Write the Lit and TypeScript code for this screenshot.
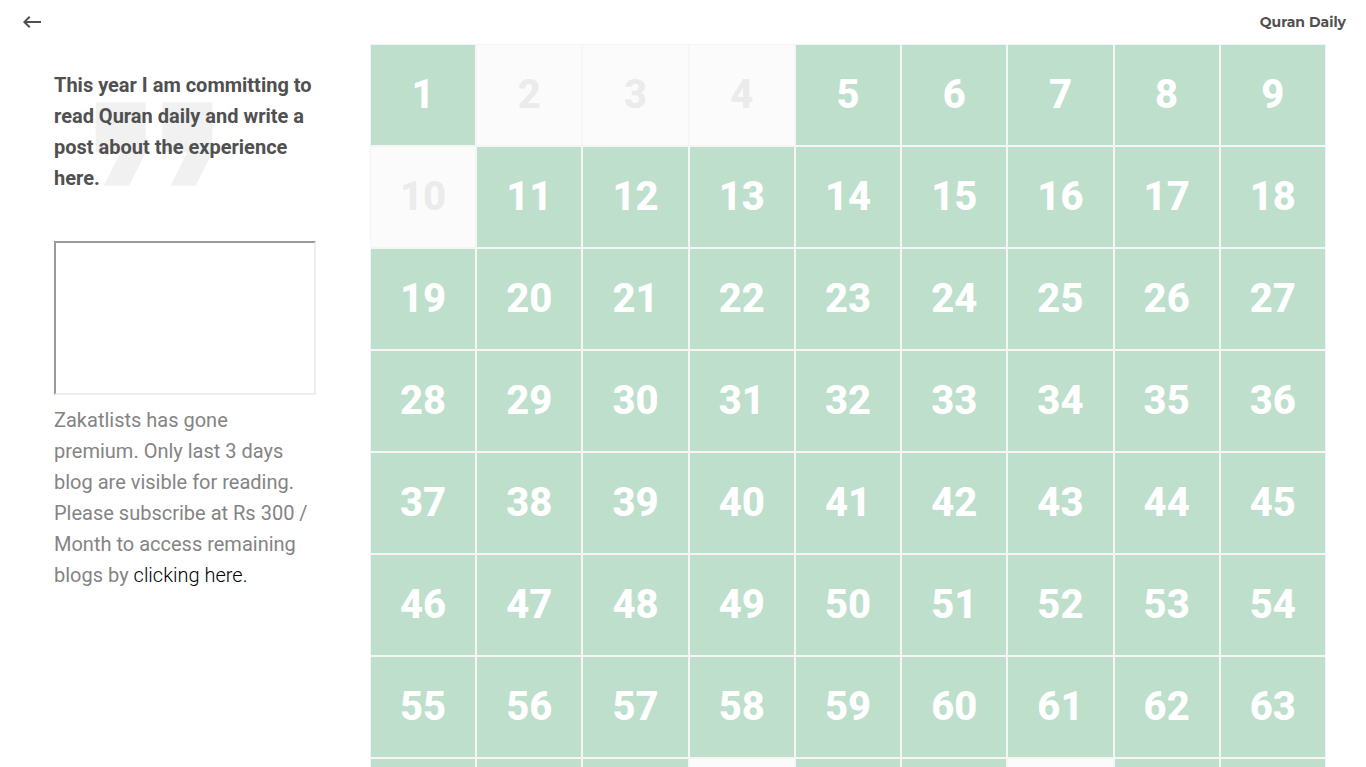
import { LitElement, html, css } from "lit";
import { customElement } from "lit/decorators.js";
import { classMap } from "lit/directives/class-map.js";

const MISSED_DAYS = new Set([2, 3, 4, 10, 67, 70]);
const DAYS = Array.from({ length: 72 }, (_, i) => i + 1);

@customElement("day-grid")
export class DayGrid extends LitElement {
  static styles = css`
    :host {
      display: block;
    }
    .grid {
      display: grid;
      grid-template-columns: repeat(9, 1fr);
      margin: 0;
      padding: 0;
      list-style: none;
    }
    .day {
      display: flex;
      align-items: center;
      justify-content: center;
      box-sizing: border-box;
      height: 102px;
      border: 1px solid #f5f5f5;
      background: #bedfcc;
      color: #ffffff;
      font-size: 40px;
      font-weight: 800;
      line-height: 48px;
    }
    .missed {
      background: #fbfbfb;
      color: #ebebeb;
    }
  `;

  render() {
    return html`
      <ol class="grid">
        ${DAYS.map(
          (day) => html`<li class=${classMap({ day: true, missed: MISSED_DAYS.has(day) })}>${day}</li>`
        )}
      </ol>
    `;
  }
}

@customElement("app-root")
export class AppRoot extends LitElement {
  static styles = css`
    :host {
      display: flex;
      flex-direction: column;
      height: 100vh;
      overflow-y: auto;
      scrollbar-width: none;
      background: #ffffff;
      color: #505050;
      font-family: Roboto, "Liberation Sans", sans-serif;
    }
    .bar {
      display: flex;
      flex: none;
      align-items: center;
      justify-content: space-between;
      height: 44px;
      padding: 0 20px;
    }
    .back {
      display: flex;
      padding: 0;
      border: 0;
      background: none;
      color: #505050;
      cursor: pointer;
    }
    .title {
      margin: 0;
      font-family: Montserrat, Inter, sans-serif;
      font-size: 14px;
      font-weight: 700;
      line-height: 20px;
    }
    .content {
      display: flex;
      flex: 1 0 auto;
      padding-right: 40px;
    }
    .side {
      position: relative;
      box-sizing: border-box;
      flex: none;
      width: 370px;
      padding: 26px 54px 0;
      font-size: 20px;
      line-height: 31px;
    }
    .quote {
      position: absolute;
      top: 0;
      left: 54px;
      color: #f1f1f1;
    }
    .goal {
      position: relative;
      margin: 0 0 47px;
      font-size: 20px;
      font-weight: 700;
    }
    .frame {
      display: block;
      box-sizing: border-box;
      width: 100%;
      height: 154px;
      margin-bottom: 10px;
      border: 2px inset #eeeeee;
    }
    .note {
      margin: 0;
      color: #848484;
    }
    .link {
      color: #000000;
      font-weight: 300;
      text-decoration: none;
    }
    .days {
      flex: 1;
      min-width: 0;
    }
  `;

  render() {
    return html`
      <header class="bar">
        <button class="back" aria-label="Back">
          <svg width="24" height="24" viewBox="0 0 24 24" fill="currentColor" aria-hidden="true">
            <path d="M21 11H6.83l3.58-3.59L9 6l-6 6 6 6 1.41-1.41L6.83 13H21z" />
          </svg>
        </button>
        <h1 class="title">Quran Daily</h1>
      </header>
      <main class="content">
        <section class="side">
          <svg class="quote" width="200" height="200" viewBox="0 0 24 24" fill="currentColor" aria-hidden="true">
            <path d="M6 17h3l2-4V7H5v6h3zm8 0h3l2-4V7h-6v6h3z" />
          </svg>
          <h2 class="goal">
            This year I am committing to read Quran daily and write a post about the experience here.
          </h2>
          <iframe class="frame" title="Daily post"></iframe>
          <p class="note">
            Zakatlists has gone premium. Only last 3 days blog are visible for reading. Please subscribe at Rs 300 /
            Month to access remaining blogs by <a class="link" href="#subscribe">clicking here.</a>
          </p>
        </section>
        <day-grid class="days"></day-grid>
      </main>
    `;
  }
}
